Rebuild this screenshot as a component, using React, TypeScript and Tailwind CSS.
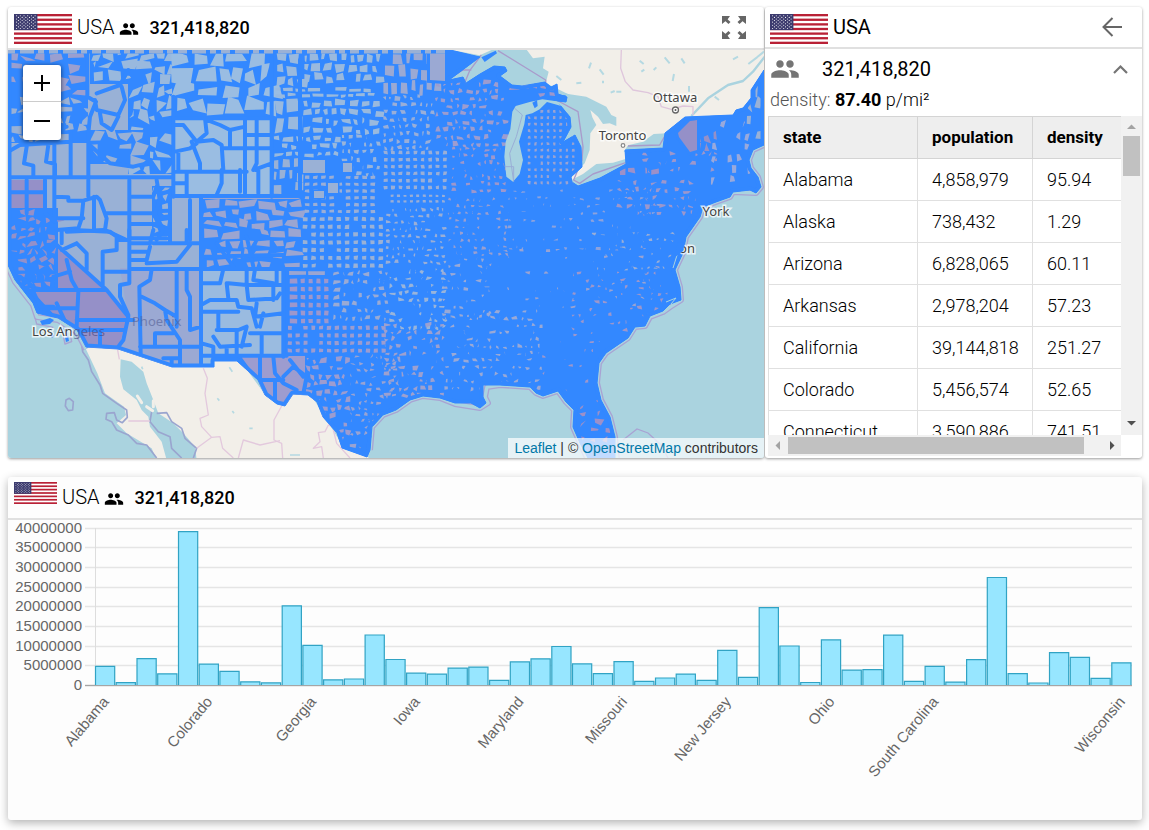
import React from "react";
import { MdPeople } from "react-icons/md";

const rows: [string, string, string][] = [
  ["Alabama", "4,858,979", "95.94"],
  ["Alaska", "738,432", "1.29"],
  ["Arizona", "6,828,065", "60.11"],
  ["Arkansas", "2,978,204", "57.23"],
  ["California", "39,144,818", "251.27"],
  ["Colorado", "5,456,574", "52.65"],
  ["Connecticut", "3,590,886", "741.51"],
];

// Population in millions, in alphabetical order of state.
const populations = [
  4.859, 0.738, 6.828, 2.978, 39.145, 5.457, 3.591, 0.946, 0.672, 20.271, 10.215, 1.432, 1.655, 12.86, 6.62, 3.124,
  2.912, 4.425, 4.671, 1.329, 6.006, 6.794, 9.923, 5.49, 2.992, 6.084, 1.033, 1.896, 2.891, 1.331, 8.958, 2.085,
  19.796, 10.043, 0.757, 11.613, 3.911, 4.029, 12.803, 1.056, 4.896, 0.858, 6.6, 27.469, 2.996, 0.626, 8.383, 7.17,
  1.844, 5.771,
];

const chartLabels: [number, string][] = [
  [0, "Alabama"],
  [5, "Colorado"],
  [10, "Georgia"],
  [15, "Iowa"],
  [20, "Maryland"],
  [25, "Missouri"],
  [30, "New Jersey"],
  [35, "Ohio"],
  [40, "South Carolina"],
  [49, "Wisconsin"],
];

function Flag({ className }: { className: string }) {
  const stars = [];
  for (let r = 0; r < 9; r++) {
    const n = r % 2 ? 5 : 6;
    for (let c = 0; c < n; c++) {
      stars.push(<circle key={`${r}-${c}`} cx={2.6 + c * 3.7 + (r % 2 ? 1.85 : 0)} cy={1.8 + r * 1.58} r="0.55" fill="#fff" />);
    }
  }
  return (
    <svg className={className} viewBox="0 0 58 30" preserveAspectRatio="none" role="img" aria-label="Flag of the USA">
      <rect width="58" height="30" fill="#fff" />
      {[0, 2, 4, 6, 8, 10, 12].map((i) => (
        <rect key={i} y={(i * 30) / 13} width="58" height={30 / 13} fill="#b92136" />
      ))}
      <rect width="23.4" height="16.1" fill="#3c3b6e" />
      {stars}
    </svg>
  );
}

function makeRandom(seed: number) {
  let s = seed;
  return () => {
    s = (s * 1664525 + 1013904223) % 4294967296;
    return s / 4294967296;
  };
}

type Zone = {
  x: number; y: number; w: number; h: number;
  sx: number; sy: number; gap: number; jit: number; keep: number; color: string; base?: boolean;
};

// Quadrilateral counties on a loose grid, with the gap between them showing the border colour.
function zonePath(z: Zone, seed: number) {
  const rnd = makeRandom(seed * 7919 + 17);
  const even = z.jit <= 1;
  let d = "";
  for (let y = z.y; y < z.y + z.h - z.sy * 0.5; y += z.sy) {
    let x = z.x;
    while (x < z.x + z.w - z.sx * 0.4) {
      const w = even ? z.sx : z.sx * (0.65 + rnd() * 0.7);
      const shift = even ? 0 : (rnd() - 0.5) * z.sy * 0.35;
      if (rnd() < z.keep) {
        const g = z.gap / 2;
        const j = () => (rnd() - 0.5) * z.jit;
        const p = (px: number, py: number) => `${(px + j()).toFixed(1)},${(py + shift + j()).toFixed(1)}`;
        d += `M${p(x + g, y + g)}L${p(x + w - g, y + g)} ${p(x + w - g, y + z.sy - g)} ${p(x + g, y + z.sy - g)}Z`;
      }
      x += w;
    }
  }
  return d;
}

const zones: Zone[] = [
  { x: 8, y: 52, w: 78, h: 45, sx: 15, sy: 11, gap: 4, jit: 6, keep: 0.9, color: "#9a9fd0", base: true },
  { x: 8, y: 97, w: 80, h: 46, sx: 11, sy: 9, gap: 4, jit: 5, keep: 0.75, color: "#99b1d6", base: true },
  { x: 90, y: 50, w: 84, h: 34, sx: 12, sy: 11, gap: 4, jit: 6, keep: 0.9, color: "#99b9de", base: true },
  { x: 128, y: 84, w: 44, h: 90, sx: 14, sy: 13, gap: 4.5, jit: 8, keep: 0.9, color: "#99b9de", base: true },
  { x: 90, y: 130, w: 60, h: 34, sx: 13, sy: 12, gap: 4, jit: 7, keep: 0.85, color: "#99b1d6", base: true },
  { x: 172, y: 50, w: 100, h: 67, sx: 18, sy: 16, gap: 4, jit: 7, keep: 1, color: "#9abde2", base: true },
  { x: 8, y: 208, w: 50, h: 80, sx: 9, sy: 8, gap: 4, jit: 5, keep: 0.8, color: "#9590c8", base: true },
  { x: 152, y: 186, w: 20, h: 50, sx: 8, sy: 8, gap: 4, jit: 4, keep: 0.8, color: "#99b1d6", base: true },
  { x: 203, y: 199, w: 97, h: 68, sx: 15, sy: 10, gap: 4, jit: 4, keep: 0.88, color: "#9ba5d1", base: true },
  { x: 274, y: 51, w: 28, h: 36, sx: 11, sy: 12, gap: 4, jit: 4, keep: 1, color: "#99b9de" },
  { x: 302, y: 51, w: 77, h: 34, sx: 10, sy: 11, gap: 4, jit: 2.5, keep: 0.96, color: "#99b9de" },
  { x: 274, y: 87, w: 105, h: 11, sx: 11, sy: 5.5, gap: 2.6, jit: 1.1, keep: 0.95, color: "#99b9de" },
  { x: 274, y: 99, w: 28, h: 36, sx: 14, sy: 17, gap: 4, jit: 3, keep: 1, color: "#99b9de" },
  { x: 302, y: 99, w: 76, h: 34, sx: 10, sy: 9, gap: 4, jit: 2.4, keep: 0.95, color: "#99b9de" },
  { x: 272, y: 135, w: 68, h: 23, sx: 11, sy: 7.5, gap: 3.6, jit: 2, keep: 0.9, color: "#99b9de" },
  { x: 340, y: 133, w: 38, h: 45, sx: 7, sy: 7.5, gap: 4, jit: 1.6, keep: 0.85, color: "#99b4da" },
  { x: 272, y: 158, w: 28, h: 38, sx: 9, sy: 12, gap: 4, jit: 1.5, keep: 0.95, color: "#99b1d6" },
  { x: 303, y: 174, w: 76, h: 41, sx: 8.2, sy: 6.8, gap: 3.8, jit: 0.8, keep: 0.9, color: "#9aaed6" },
  { x: 301, y: 215, w: 84, h: 52, sx: 8.4, sy: 7.8, gap: 4, jit: 0.9, keep: 0.96, color: "#9ab1d6" },
  { x: 288, y: 270, w: 42, h: 6, sx: 19, sy: 6, gap: 2.2, jit: 0.5, keep: 1, color: "#9ba5d1" },
  { x: 288, y: 277, w: 10, h: 46, sx: 11, sy: 8, gap: 3.4, jit: 0.5, keep: 1, color: "#9d97cc" },
  { x: 299, y: 277, w: 32, h: 46, sx: 7.8, sy: 8, gap: 3.6, jit: 0.6, keep: 1, color: "#9d97cc" },
  { x: 332, y: 270, w: 56, h: 52, sx: 7.4, sy: 7.4, gap: 4, jit: 2.4, keep: 0.8, color: "#9aaad4" },
  { x: 286, y: 324, w: 98, h: 30, sx: 7.8, sy: 7.6, gap: 3.8, jit: 0.8, keep: 0.97, color: "#9d9ccf" },
  { x: 289, y: 356, w: 60, h: 92, sx: 8, sy: 8, gap: 3.7, jit: 3, keep: 0.9, color: "#9d9ccf" },
  { x: 349, y: 354, w: 47, h: 98, sx: 6.4, sy: 6.4, gap: 3.9, jit: 2.4, keep: 0.7, color: "#9aa3d2" },
  { x: 382, y: 50, w: 60, h: 44, sx: 11, sy: 15, gap: 4, jit: 2, keep: 0.95, color: "#9ba9d3" },
  { x: 382, y: 94, w: 50, h: 54, sx: 7.2, sy: 7.2, gap: 4, jit: 2.2, keep: 0.85, color: "#99aed8" },
  { x: 382, y: 149, w: 66, h: 42, sx: 7.4, sy: 7, gap: 3.7, jit: 1, keep: 0.96, color: "#9aaed6" },
  { x: 389, y: 193, w: 60, h: 12, sx: 6.4, sy: 5.6, gap: 3.4, jit: 0.5, keep: 0.96, color: "#9aaed6" },
  { x: 384, y: 206, w: 62, h: 62, sx: 6.6, sy: 6.6, gap: 4.1, jit: 1.7, keep: 0.8, color: "#9aaed6" },
  { x: 434, y: 80, w: 70, h: 66, sx: 8, sy: 7.6, gap: 4, jit: 2.4, keep: 0.85, color: "#9d9ccf" },
  { x: 450, y: 146, w: 56, h: 50, sx: 7, sy: 6.8, gap: 4.1, jit: 1.8, keep: 0.75, color: "#9d97cc" },
  { x: 446, y: 196, w: 60, h: 60, sx: 6.6, sy: 6.8, gap: 4.7, jit: 1.8, keep: 0.6, color: "#9a9fd0" },
  { x: 440, y: 256, w: 48, h: 60, sx: 7, sy: 7, gap: 4.7, jit: 2, keep: 0.5, color: "#9aa9d6" },
  { x: 388, y: 268, w: 56, h: 60, sx: 7, sy: 7, gap: 4.2, jit: 2.6, keep: 0.65, color: "#99b4da" },
  { x: 383, y: 322, w: 60, h: 76, sx: 7, sy: 7, gap: 4, jit: 3, keep: 0.62, color: "#9da0cf" },
  { x: 443, y: 308, w: 100, h: 84, sx: 7, sy: 7, gap: 4.6, jit: 2.6, keep: 0.5, color: "#9aa9d6" },
  { x: 508, y: 84, w: 45, h: 14, sx: 10, sy: 7, gap: 4, jit: 2, keep: 0.6, color: "#9d97cc" },
  { x: 526, y: 108, w: 48, h: 76, sx: 6.3, sy: 6.5, gap: 3.8, jit: 0.8, keep: 0.9, color: "#9aa3d2" },
  { x: 506, y: 188, w: 160, h: 60, sx: 7, sy: 7, gap: 5.3, jit: 1.6, keep: 0.35, color: "#8ea2dc" },
  { x: 486, y: 246, w: 170, h: 64, sx: 8, sy: 8, gap: 6.4, jit: 2, keep: 0.28, color: "#9aa3d2" },
  { x: 570, y: 270, w: 100, h: 66, sx: 7, sy: 7, gap: 4.7, jit: 2.4, keep: 0.38, color: "#9d97cc" },
  { x: 540, y: 330, w: 70, h: 66, sx: 8, sy: 8, gap: 6, jit: 2, keep: 0.3, color: "#9d97cc" },
  { x: 578, y: 395, w: 30, h: 50, sx: 9, sy: 8, gap: 4.6, jit: 4, keep: 0.5, color: "#9d90c8" },
  { x: 618, y: 166, w: 44, h: 12, sx: 9, sy: 9, gap: 3.8, jit: 2, keep: 0.9, color: "#9d90c8" },
  { x: 615, y: 178, w: 82, h: 42, sx: 8, sy: 8, gap: 5.2, jit: 3, keep: 0.65, color: "#9d97cc" },
  { x: 692, y: 132, w: 30, h: 20, sx: 9, sy: 11, gap: 4, jit: 4, keep: 0.7, color: "#9590c8" },
  { x: 640, y: 150, w: 80, h: 28, sx: 8, sy: 8, gap: 4.9, jit: 3, keep: 0.5, color: "#9d97cc" },
  { x: 710, y: 120, w: 40, h: 62, sx: 7, sy: 11, gap: 4.6, jit: 3, keep: 0.5, color: "#99a9dc" },
  { x: 744, y: 82, w: 24, h: 60, sx: 9, sy: 15, gap: 5, jit: 5, keep: 0.8, color: "#99b1d6" },
  { x: 590, y: 230, w: 85, h: 40, sx: 7, sy: 7, gap: 5.2, jit: 2, keep: 0.35, color: "#9aaed6" },
];

const northWestLines =
  "M262,150V290L288,305 270,350 265,400V530M24,532H515M135,540V640L165,665M520,290V590M520,355H815M525,588H900M815,150V590M900,180V590M388,540V720M163,430V660M265,540V590M603,590V720" +
  "M24,455L60,435 140,430 210,425M80,440L72,490 100,497V530M145,435L138,485 165,492V530M212,395V530M24,577H135M80,540V640M165,590L205,592V602H250L245,655 235,685 170,690M250,602L290,590 300,600 320,655 315,690 380,720M175,655H250M282,590V690M315,640H388M200,695L310,690" +
  "M290,280L360,255 385,210M285,300L290,330 355,345 375,300 365,260M300,340L305,370 335,390 355,350M275,440L330,490 400,500 440,490M24,350L80,340 130,390 200,380" +
  "M520,375H550L590,425 620,400 615,355M575,425L600,490V510M590,425L640,420 665,435 670,510M620,360L660,375 690,390 735,380M735,355V580M670,445H815M690,390V440M530,515H740M535,455V515M560,515V585M665,510V550L650,585M720,510V575M770,360V490L760,510 815,490M775,510V580M740,405H815M525,455L570,445 590,430M525,550H560" +
  "M388,590H460L470,560M388,640H460L475,670M388,672H470M510,590V720M470,540L480,600 465,640 490,690 470,720M395,715H500M570,600V720";

const southWestLines =
  "M165,40L320,180 385,260 370,330 355,350M185,0V40M220,0L330,5 350,20V60L308,65V165M350,30H388M308,125H388M230,40L260,70V120M185,60L230,40M388,0V160L360,165V200L385,255M388,117H900M603,0V410M388,40H450L460,0M460,40H603M388,65H440M388,90H440L450,50M440,100L530,95 570,45M510,0V35M560,0V40" +
  "M95,180H320M200,90L215,150 235,185 230,290M155,180L160,140 210,125M140,235H230M170,220L205,295M230,270H400M230,300H370M300,300V345M100,185L120,230 160,230M60,140L100,170" +
  "M455,117L450,150 418,170 422,370M425,200L465,220 495,240 500,270 540,330V410M530,117V290M560,117V180L570,200V300L603,290M495,240L530,260M420,350H603M465,350V310H520M490,385H540M515,410V385" +
  "M603,160H660L670,117M603,225L630,210H710L715,230M603,245H715M680,160L685,205M655,245V300M740,117V165L745,210M765,117L760,150 820,160M685,160L740,165H845M745,210L830,205 840,190M715,230L755,235 770,290M770,220L765,260 850,250M830,120V160M820,165V210M650,300L715,300 740,290 725,350M780,290L790,250M750,310H850M785,310V370M605,340L640,350V390M640,320L660,350 750,345M680,350V380M710,300V385M603,377H860M850,117V380M603,80L850,75M650,40L700,110M740,20L760,110" +
  "M720,385L760,440 780,450M780,380V450M820,380L825,430 850,460 890,480M780,450H850M825,450V520M850,440L880,410 920,440 910,490M870,390L910,440";

const usOutline =
  "M8,50L450,50 480,57 449,80 463,77 466,83 480,74 494,66 505,67 507,71 500,76 512,85 522,86 545,82 551,87 557,84 558,94 567,97 566,102 549,100 560,105 570,117 571,127 563,142 575,135 581,147 582,167 571,177 572,182 578,186 600,178 626,164 625,150 663,148 665,133 685,117 733,115 736,110 743,108 751,98 751,90 764,70 764,145 753,150 749,160 751,168 758,177 761,187 756,193 750,190 733,192 730,197 716,202 703,207 700,217 686,237 683,253 675,270 680,287 681,300 670,304 663,311 650,316 645,326 635,327 628,338 606,353 599,363 597,383 601,400 610,417 615,437 615,458 588,458 580,443 573,427 574,410 566,402 558,391 543,396 536,393 530,387 500,385 483,385 483,397 486,403 480,408 471,403 455,403 440,398 423,396 410,400 396,410 383,415 372,427 370,450 367,457 342,448 337,433 323,417 317,402 308,395 293,394 285,406 277,404 265,395 258,380 237,361 214,361 214,367 172,367 118,349 86,347 77,330 58,318 37,313 33,303 15,280 8,265Z";

const eastCoast =
  "M764,145L753,150 749,160 751,168 758,177 761,187 756,193 733,192 730,197 716,202 703,207 700,217 686,237 683,253 675,270 680,287 681,300 670,307 663,312 650,317 645,326 635,327 628,338 606,353 599,363 597,383 601,400 610,417 615,437 617,460M588,460L580,443 573,427 574,410 566,402 558,391 543,396 536,393 530,387 500,385 487,387 485,397 488,403 480,408 455,404 440,398 423,396 410,400 396,410 383,415 372,427 370,450M8,267L15,282 33,305 37,317 58,320 77,332 86,349";

function CityLabel({ x, y, children }: { x: number; y: number; children: string }) {
  return (
    <text x={x} y={y} fontSize="13" fill="#444" stroke="#fff" strokeOpacity="0.75" strokeWidth="3" paintOrder="stroke" textAnchor="middle" fontFamily="'Noto Sans', sans-serif">
      {children}
    </text>
  );
}

function CountyMap() {
  return (
    <svg className="block size-full" viewBox="8 50 756 408" preserveAspectRatio="xMinYMin slice" role="img" aria-label="Map of US counties">
      <defs>
        <clipPath id="us"><path d={usOutline} /></clipPath>
      </defs>
      <rect x="0" y="40" width="780" height="430" fill="#aad3df" />

      {/* Canada */}
      <g transform="translate(383 0) scale(0.33333)" strokeLinejoin="round">
        <path d="M430,150H1149V310L840,450 727,480 590,555 560,540 590,300 490,250Z" fill="#f2efe9" />
        <path d="M180,250L240,205 290,165 340,148H430L450,175 485,170 480,205 497,215 488,250 515,265 410,262 380,255Z" fill="#aad3df" />
        <path d="M195,148H330L290,166Z" fill="#f2efe9" />
        <path d="M490,300L525,275 560,283 610,290 670,320 685,345 700,352V378L680,370 660,372 645,350 622,330 628,352 640,375 622,400 620,450 605,490 590,505 585,440 540,430 550,350Z" fill="#aad3df" />
        <path d="M555,545L600,522 640,492 690,488 735,475V492L650,538 590,560Z" fill="#aad3df" />
        <path d="M722,456L735,436 780,425 812,402 852,400V432L825,450Z" fill="#aad3df" />
        <path d="M925,348L975,295 1035,255 1080,243 1110,215 1149,165" fill="none" stroke="#aad3df" strokeWidth="7" />
        <path d="M1096,192L1122,172 1149,150M1050,178L1065,170M618,205L624,188M650,208L662,224M660,242V250M770,182L782,192M775,215L784,209M869,243L873,222M812,210L820,202M895,175L905,190M700,275H715M683,278L695,273M580,250L595,248M918,258V275M995,290L1008,300M520,228L535,240M845,172L860,190" fill="none" stroke="#b5d9e2" strokeWidth="6" />
        <path d="M715,150L713,205 727,245 750,270 795,278 825,290 835,320 865,328 900,318 930,320V345" fill="none" stroke="#dfc6dc" strokeWidth="4" />
        <path d="M345,152L488,240V275L520,300 585,335 600,440 597,480 572,540 590,550 630,522 728,488M735,438L830,435 850,400M295,165L260,212 245,248M200,235L240,210H265" fill="none" stroke="#a99bcb" strokeWidth="4" />
      </g>

      {/* Mexico */}
      <g transform="translate(0 230) scale(0.33333)" strokeLinejoin="round">
        <path d="M252,345L360,345 515,410H643V385H715L800,500 930,490 1030,650 1105,680V690H590L585,650 550,610 520,580 475,550 460,510 440,460 430,425 395,395 362,388 360,440 370,478 410,510 425,540 445,560 450,590 485,635 500,690H470L455,655 410,628 380,610 350,580 378,555 372,530 315,490 292,430Z" fill="#f2efe9" />
        <path d="M245,345L248,365 265,390 275,425 300,465 308,490 350,520 380,540 382,562 367,578 350,570 343,548 320,550 318,568 335,575 350,600 385,615 410,640 440,645 470,684M455,545L450,575 475,605 510,620 515,655 545,684M470,550L500,548 515,575 545,595 555,625 590,655 580,684" fill="none" stroke="#9aa5cf" strokeWidth="5" />
        <path d="M412,498L425,518M440,530L458,542M460,512V530" fill="none" stroke="#f2efe9" strokeWidth="9" strokeLinecap="round" />
        <path d="M352,355L358,388M385,573H450M610,415L622,445 615,490 625,555 600,565 605,590 635,622 590,655M635,622L660,620 668,655 700,684M845,528L822,570V630L845,640 848,684M715,684L730,630 780,645 840,632M1000,590L985,585 975,605 955,608 960,635 940,655 965,650 970,684M1000,600L1010,640 1050,684" fill="none" stroke="#e3c9dd" strokeWidth="4" />
        <path d="M688,412L697,425M870,675H900M652,505L658,512M697,543L702,550M748,595H758M425,410L428,418" fill="none" stroke="#b5d9e2" strokeWidth="5" />
        <path d="M198,510L208,505 220,515 218,540 205,542 196,528Z" fill="none" stroke="#9aa5cf" strokeWidth="5" />
        <path d="M105,262L110,282 160,292M190,318L195,342 215,335 210,310" fill="none" stroke="#a9a3d3" strokeWidth="4" />
      </g>

      <path d="M623,440L637,429 648,433 661,445 668,458" fill="none" stroke="#a9a3d3" strokeWidth="1.3" />
      <path d={eastCoast} fill="none" stroke="#a9a3d3" strokeWidth="6" strokeLinejoin="round" />
      <path d={eastCoast} fill="none" stroke="#aad3df" strokeWidth="3.4" strokeLinejoin="round" />

      <path d={usOutline} fill="#3388ff" stroke="#3388ff" strokeWidth="1" strokeLinejoin="round" />
      <g clipPath="url(#us)">
        <path d="M8,97H88V50H172V178H129V317L45,235V180H8Z" fill="#99b1d6" />
        <path d="M8,180H45V235L107,290 128,317 122,349H86L8,265Z" fill="#9590c8" />
        <path d="M172,50H272V196H172Z" fill="#9abde2" />
        <path d="M129,178H173V196H201V268H129Z" fill="#99b1d6" />
        <path d="M201,196H300V268H201Z" fill="#9ba5d1" />
        <path d="M120,268H201V367H160L118,349 128,317Z" fill="#9ba9d3" />
        <path d="M201,268H285V356H214V370H201Z" fill="#9abbe0" />
        <path d="M237,356H305V395L285,406 260,395Z" fill="#9d9ccf" />
        {zones.map((z, i) => (
          <React.Fragment key={i}>
            {z.base && <rect x={z.x} y={z.y} width={z.w} height={z.h} fill="#3388ff" />}
            <path d={zonePath(z, i + 1)} fill={z.color} />
          </React.Fragment>
        ))}
        <path d="M303,160H325V173H303ZM343,163H352V172H343ZM314,191H324V198H314ZM328,183H338V193H328Z" fill="#9ab1d6" stroke="#3388ff" strokeWidth="3" paintOrder="stroke" />
        <path d="M430,50H445V81L430,80Z" fill="#9ba9d3" stroke="#3388ff" strokeWidth="6" paintOrder="stroke" />
        <path d="M678,133L690,121 697,120V150L690,152 679,137Z" fill="#9590c8" stroke="#3388ff" strokeWidth="6" paintOrder="stroke" />
        <g fill="none" stroke="#3388ff" strokeWidth="12" strokeLinejoin="round" strokeLinecap="round">
          <path transform="scale(0.33333)" d={northWestLines} />
          <path transform="translate(0 230) scale(0.33333)" d={southWestLines} />
        </g>
        <path d={usOutline} fill="none" stroke="#3388ff" strokeWidth="7" strokeLinejoin="round" />
        <path d="M6,50H450" stroke="#9ab1d6" strokeWidth="7" strokeDasharray="9 5 14 4 6 5" />
      </g>

      {/* Lake Michigan and islands */}
      <g transform="translate(383 0) scale(0.33333)">
        <path d="M388,335L398,318 440,306 478,298 520,304 535,318 492,306 470,328 448,340 428,345 424,372 408,425 420,480 410,522 390,545 370,530 364,470 368,425 382,388Z" fill="#aad3df" />
        <path d="M395,325L418,345 400,410 380,460 392,545M365,500H392V540" fill="none" stroke="#9aaed6" strokeWidth="3" />
        <path d="M448,308L462,300 464,318 455,325Z" fill="#3388ff" />
        <path d="M295,172L338,152 342,160 305,186Z" fill="#3388ff" />
        <path d="M522,285L548,286 550,298 530,302Z" fill="#3388ff" />
      </g>
      <path d="M678,252L673,268M666,302L676,298 671,304" stroke="#aad3df" strokeWidth="1" fill="none" />
      <g fill="#3388ff">
        <path d="M40,321L50,318 54,320 50,324 42,325Z" />
        <path d="M63,328L67,331 69,341 66,342Z" />
        <path d="M49,333L54,335 52,338Z" />
      </g>

      <CityLabel x={675} y={102}>Ottawa</CityLabel>
      <circle cx="675.5" cy="110" r="3" fill="#fff" stroke="#666" strokeWidth="1.3" />
      <circle cx="675.5" cy="110" r="1" fill="#555" />
      <CityLabel x={622.5} y={140}>Toronto</CityLabel>
      <circle cx="623" cy="145.500" r="1.800" fill="#fff" stroke="#888" strokeWidth="1.2" />
      <CityLabel x={716} y={216}>York</CityLabel>
      <CityLabel x={687} y={253}>on</CityLabel>
      <path d="M674,258L683,251 685,243 678,242Z" fill="#3388ff" />
      <text x="32" y="336" fontSize="13" fontFamily="'Noto Sans', sans-serif">
        <tspan fill="#444" stroke="#fff" strokeOpacity="0.75" strokeWidth="3" paintOrder="stroke">Los An</tspan>
        <tspan fill="#44457c" fillOpacity="0.6">geles</tspan>
      </text>
      <text x="132" y="326" fontSize="13" fill="#555f95" opacity="0.6" fontFamily="'Noto Sans', sans-serif">Phoenix</text>
    </svg>
  );
}

function PopulationHeader({ flagClass }: { flagClass: string }) {
  return (
    <div className="flex items-start">
      <Flag className={flagClass} />
      <h2 className="ml-[5px] text-xl leading-[40px] font-light">USA</h2>
      <MdPeople className="mt-3 ml-1 size-5" />
      <span className="ml-[11px] text-[18px] leading-[41px] font-medium">321,418,820</span>
    </div>
  );
}

function MapPanel() {
  return (
    <section className="flex min-w-0 flex-col overflow-hidden rounded-[3px] bg-white shadow-[0_1px_3px_rgba(0,0,0,0.4)]">
      <header className="flex h-[43px] items-start justify-between border-b-2 border-[#e0e0e0] pr-[17px] pl-1.5">
        <PopulationHeader flagClass="mt-[7px] h-[30px] w-[58px]" />
        <button type="button" aria-label="Full screen" className="mt-2 text-[#666]">
          <svg className="h-6 w-[26px]" viewBox="0 0 26 24" fill="currentColor" stroke="currentColor">
            <path stroke="none" d="M1,1H9L6.500,4.500 1,9ZM25,1V9L19.500,4.500 17,1ZM1,24V16L6.500,20.500 9,24ZM25,24H17L19.500,20.500 25,16Z" />
            <path fill="none" strokeWidth="3" d="M3,3L8.500,8M23,3L17.500,8M3,22L8.500,17M23,22L17.500,17" />
          </svg>
        </button>
      </header>
      <div className="relative h-[408px] overflow-hidden">
        <CountyMap />
        <div className="absolute top-[15px] left-[15px] w-[38px] overflow-hidden rounded-[3px] bg-white shadow-[0_1px_5px_rgba(0,0,0,0.65)]">
          <button type="button" aria-label="Zoom in" className="flex h-[37px] w-full items-center justify-center border-b border-[#ccc]">
            <svg className="size-4" viewBox="0 0 16 16" stroke="#000" strokeWidth="2"><path d="M0,8H16M8,0V16" /></svg>
          </button>
          <button type="button" aria-label="Zoom out" className="flex h-[38px] w-full items-center justify-center">
            <svg className="size-4" viewBox="0 0 16 16" stroke="#000" strokeWidth="2"><path d="M0,8H16" /></svg>
          </button>
        </div>
        <p className="absolute right-0 bottom-0 bg-white/70 px-1.5 font-['Liberation_Sans',sans-serif] text-sm whitespace-nowrap text-[#333]">
          <a href="#leaflet" className="text-[#0078a8]">Leaflet</a> | © <a href="#osm" className="text-[#0078a8]">OpenStreetMap</a> contributors
        </p>
      </div>
    </section>
  );
}

function StatePanel() {
  return (
    <section className="flex h-[451px] min-w-0 flex-col overflow-hidden rounded-[3px] bg-white shadow-[0_1px_3px_rgba(0,0,0,0.4)]">
      <header className="flex h-[42px] shrink-0 items-start justify-between border-b-2 border-[#e0e0e0] pr-5 pl-[5px]">
        <div className="flex">
          <Flag className="mt-[7px] h-[30px] w-[58px]" />
          <h2 className="ml-[5px] text-xl leading-[40px]">USA</h2>
        </div>
        <button type="button" aria-label="Back" className="mt-2.5 text-[#666]">
          <svg className="size-5" viewBox="0 0 20 20" fill="none" stroke="currentColor" strokeWidth="2"><path d="M20,10H1.500M10.500,1L1.500,10 10.500,19" /></svg>
        </button>
      </header>
      <div className="flex h-10 shrink-0 items-center pr-3.5 pl-[5px]">
        <MdPeople className="size-[30px] text-[#757575]" />
        <span className="ml-[22px] text-xl">321,418,820</span>
        <button type="button" aria-label="Collapse" className="ml-auto text-[#757575]">
          <svg className="h-4 w-[15px]" viewBox="0 0 15 16" fill="none" stroke="currentColor" strokeWidth="2.200"><path d="M1,12L7.500,5.500 14,12" /></svg>
        </button>
      </div>
      <p className="h-[27px] shrink-0 pl-[5px] text-[18px] leading-[22px] font-light">
        <span className="text-[#555]">density:</span> <b className="font-bold">87.40</b> p/mi²
      </p>
      <div className="grid min-h-0 flex-1 grid-cols-[1fr_21px] grid-rows-[1fr_21px] pb-0.5 pl-[3px]">
        <div className="min-h-0 min-w-0 overflow-hidden">
          <table className="w-[450px] table-fixed border-collapse text-left text-[18px] font-light">
            <thead className="bg-[#eee]">
              <tr className="h-[42px]">
                <th className="w-[149px] border border-[#d4d4d4] pl-3.5 text-[17px] font-bold">state</th>
                <th className="w-[115px] border border-[#d4d4d4] pl-3.5 text-[17px] font-bold">population</th>
                <th className="border border-[#d4d4d4] pl-3.5 text-[17px] font-bold">density</th>
              </tr>
            </thead>
            <tbody>
              {rows.map((row) => (
                <tr key={row[0]} className="h-[42px]">
                  {row.map((cell) => (
                    <td key={cell} className="border border-[#e0e0e0] pl-3.5">{cell}</td>
                  ))}
                </tr>
              ))}
            </tbody>
          </table>
        </div>
        <div className="flex flex-col items-center bg-[#f1f1f1]">
          <svg className="h-5 w-[21px] shrink-0" viewBox="0 0 21 20"><path d="M6,13L10.500,8.500 15,13Z" fill="#a3a3a3" /></svg>
          <div className="h-10 w-[17px] bg-[#c1c1c1]" />
          <svg className="mt-auto h-[21px] w-[21px] shrink-0" viewBox="0 0 21 21"><path d="M6,7L10.500,11.500 15,7Z" fill="#505050" /></svg>
        </div>
        <div className="flex items-center bg-[#f1f1f1]">
          <svg className="h-[21px] w-5 shrink-0" viewBox="0 0 20 21"><path d="M12,6L7.500,10.500 12,15Z" fill="#a3a3a3" /></svg>
          <div className="h-[17px] w-[296px] bg-[#c1c1c1]" />
          <svg className="ml-auto h-[21px] w-[21px] shrink-0" viewBox="0 0 21 21"><path d="M10,6L14.500,10.500 10,15Z" fill="#505050" /></svg>
        </div>
        <div className="bg-white" />
      </div>
    </section>
  );
}

function PopulationChart() {
  const zero = 685.5;
  const perMillion = 3.93;
  const left = 95.5;
  const step = 20.74;
  return (
    <svg className="block w-full" viewBox="8 520 1134 300" role="img" aria-label="Population by state" fontFamily="'Liberation Sans', sans-serif" fontSize="15" fill="#666">
      {[0, 5, 10, 15, 20, 25, 30, 35, 40].map((m) => {
        const y = Math.round(zero - m * perMillion - 0.5) + 0.5;
        return (
          <g key={m}>
            <line x1="85" x2="1132" y1={y} y2={y} stroke={m ? "#e5e5e5" : "#bbb"} strokeWidth="1.5" />
            <text x="82" y={y + 4.5} textAnchor="end">{m ? m * 1000000 : 0}</text>
          </g>
        );
      })}
      <line x1={left} x2={left} y1="528" y2={zero} stroke="#ddd" />
      {populations.map((p, i) => (
        <path
          key={i}
          d={`M${(left + i * step).toFixed(1)},${zero}v${(-p * perMillion).toFixed(1)}h19.2v${(p * perMillion).toFixed(1)}`}
          fill="#97e6ff"
          stroke="#31a3c4"
          strokeWidth="1.2"
        />
      ))}
      <line x1="85" x2="1132" y1="685.500" y2="685.500" stroke="#a5a5a5" />
      {chartLabels.map(([i, name]) => (
        <text key={name} transform={`translate(${left + i * step + 14} 702) rotate(-50)`} textAnchor="end">{name}</text>
      ))}
    </svg>
  );
}

export default function App() {
  return (
    <main className="min-h-screen bg-white pt-[7px] pr-[7px] pb-2.5 pl-2 font-[Roboto,sans-serif] text-black">
      <div className="grid grid-cols-[1fr_377px] gap-px">
        <MapPanel />
        <StatePanel />
      </div>
      <section className="mt-[19px] overflow-hidden rounded-[3px] bg-[#fdfdfd] shadow-[0_3px_10px_rgba(0,0,0,0.3)]">
        <header className="h-[43px] border-b-2 border-[#e0e0e0] pl-1.5">
          <PopulationHeader flagClass="mt-[5px] h-[22px] w-[43px]" />
        </header>
        <PopulationChart />
      </section>
    </main>
  );
}
